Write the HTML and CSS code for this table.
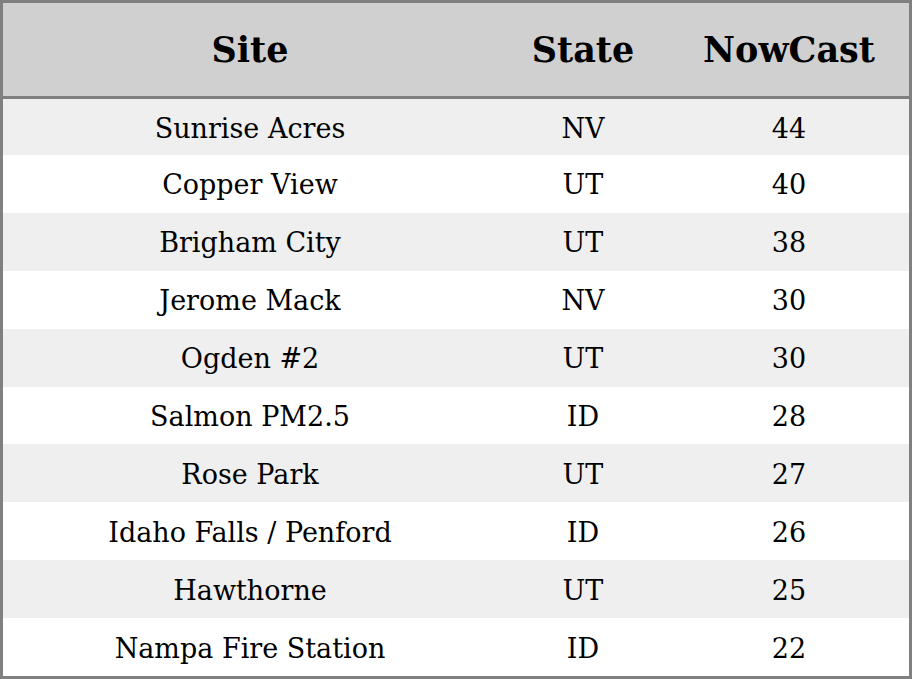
FILE: index.html
```html
<!DOCTYPE html>
<html>
<head>
<meta charset="utf-8">
<link rel="stylesheet" href="styles.css">
</head>
<body>
<table class="tbl">
<thead>
<tr><th class="c-site">Site</th><th class="c-state">State</th><th class="c-now">NowCast</th></tr>
</thead>
<tbody>
<tr><td>Sunrise Acres</td><td>NV</td><td>44</td></tr>
<tr><td>Copper View</td><td>UT</td><td>40</td></tr>
<tr><td>Brigham City</td><td>UT</td><td>38</td></tr>
<tr><td>Jerome Mack</td><td>NV</td><td>30</td></tr>
<tr><td>Ogden #2</td><td>UT</td><td>30</td></tr>
<tr><td>Salmon PM2.5</td><td>ID</td><td>28</td></tr>
<tr><td>Rose Park</td><td>UT</td><td>27</td></tr>
<tr><td>Idaho Falls / Penford</td><td>ID</td><td>26</td></tr>
<tr><td>Hawthorne</td><td>UT</td><td>25</td></tr>
<tr><td>Nampa Fire Station</td><td>ID</td><td>22</td></tr>
</tbody>
</table>
</body>
</html>
```
FILE: styles.css
```css
html, body {
  margin: 0;
  padding: 0;
  background: #ffffff;
}
.tbl {
  width: 912px;
  height: 679px;
  border-collapse: separate;
  border-spacing: 0;
  border: 3px solid #808080;
  box-sizing: border-box;
  font-family: "DejaVu Serif", serif;
  color: #000;
  table-layout: fixed;
}
.tbl th {
  background: #d0d0d0;
  font-weight: bold;
  font-size: 35px;
  height: 93px;
  padding: 0;
  border-bottom: 3px solid #808080;
  text-align: center;
}
.c-site { width: 494px; }
.c-state { width: 172px; }
.c-now { width: 240px; }
.tbl td {
  font-size: 27px;
  height: 57.9px;
  padding: 2px 0 0 0;
  box-sizing: border-box;
  text-align: center;
}
.tbl tbody tr:first-child td { height: 56px; }
.tbl tbody tr:nth-child(odd) td { background: #efefef; }
.tbl tbody tr:nth-child(even) td { background: #ffffff; }
```
